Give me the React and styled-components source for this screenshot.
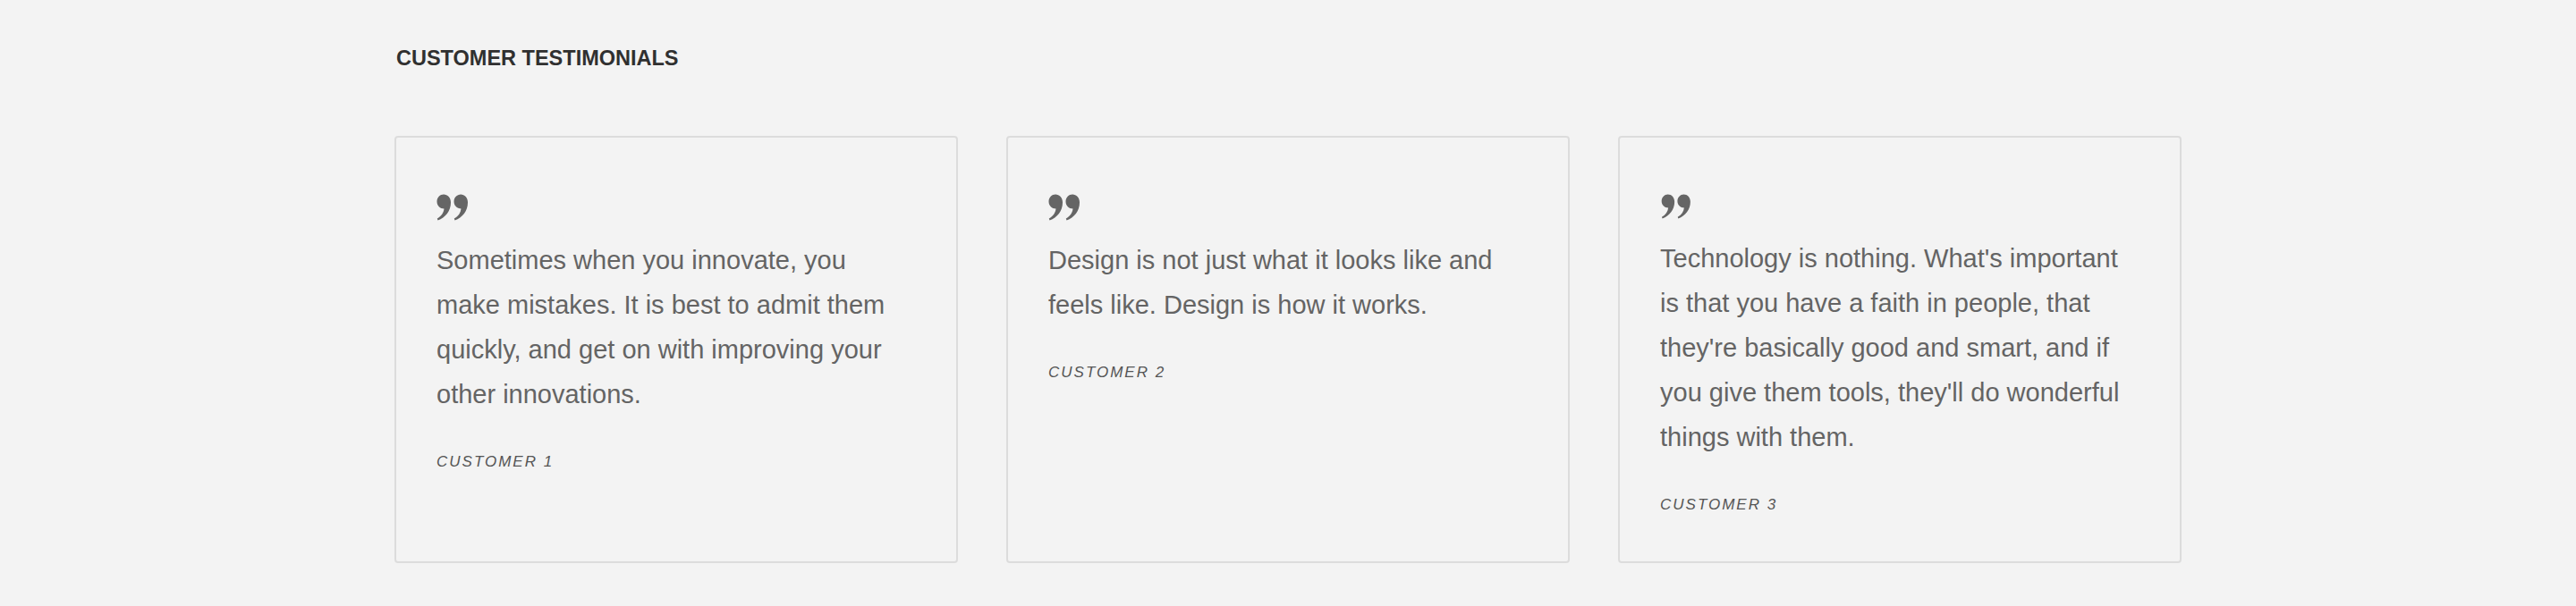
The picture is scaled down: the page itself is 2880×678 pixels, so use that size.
import React from 'react';
import styled, { createGlobalStyle } from 'styled-components';

const GlobalStyle = createGlobalStyle`
  html, body {
    margin: 0;
    padding: 0;
    background: #f3f3f3;
  }
  body {
    font-family: "Liberation Sans", Arial, Helvetica, sans-serif;
  }
`;

const Section = styled.section`
  width: 1998px;
  margin: 0 auto;
  padding-top: 51px;
`;

const Heading = styled.h2`
  margin: 0 0 72px 2px;
  font-size: 23.5px;
  line-height: 28.8px;
  font-weight: 700;
  color: #303030;
  text-transform: uppercase;
`;

const Grid = styled.div`
  display: grid;
  grid-template-columns: repeat(3, 630px);
  column-gap: 54px;
  align-items: stretch;
`;

const Card = styled.article`
  box-sizing: border-box;
  height: 478px;
  border: 2px solid #dcdcdc;
  border-radius: 4px;
  padding: 63px 55px 50px 45px;
  display: flex;
  flex-direction: column;
  align-items: flex-start;
`;

const QuoteMark = styled.svg`
  display: block;
  width: 36px;
  height: 30px;
  margin-bottom: 19px;
  fill: #656565;
`;

const Text = styled.p`
  margin: 0 0 37px;
  font-size: 29px;
  line-height: 50px;
  color: #646464;
`;

const Author = styled.cite`
  display: block;
  font-style: italic;
  font-size: 17px;
  line-height: 27px;
  letter-spacing: 2px;
  color: #555;
  text-transform: uppercase;
`;

const Quote = () => (
  <QuoteMark viewBox="0 0 36 30" aria-hidden="true">
    <path d="M8 0.5C12.5 0.5 16 4 16 9.5C16 19 10 26.5 1.5 29.5L0.8 27.5C5.5 25 8 21 8.5 16.5C4 16.5 0.5 13 0.5 8.5C0.5 4 4 0.5 8 0.5Z" />
    <path d="M27 0.5C31.5 0.5 35 4 35 9.5C35 19 29 26.5 20.5 29.5L19.8 27.5C24.5 25 27 21 27.5 16.5C23 16.5 19.5 13 19.5 8.5C19.5 4 23 0.5 27 0.5Z" />
  </QuoteMark>
);

const testimonials = [
  {
    text: 'Sometimes when you innovate, you make mistakes. It is best to admit them quickly, and get on with improving your other innovations.',
    author: 'Customer 1',
  },
  {
    text: 'Design is not just what it looks like and feels like. Design is how it works.',
    author: 'Customer 2',
  },
  {
    text: "Technology is nothing. What's important is that you have a faith in people, that they're basically good and smart, and if you give them tools, they'll do wonderful things with them.",
    author: 'Customer 3',
  },
];

const App = () => (
  <>
    <GlobalStyle />
    <Section>
      <Heading>Customer Testimonials</Heading>
      <Grid>
        {testimonials.map((t) => (
          <Card key={t.author}>
            <Quote />
            <Text>{t.text}</Text>
            <Author>{t.author}</Author>
          </Card>
        ))}
      </Grid>
    </Section>
  </>
);

export default App;
